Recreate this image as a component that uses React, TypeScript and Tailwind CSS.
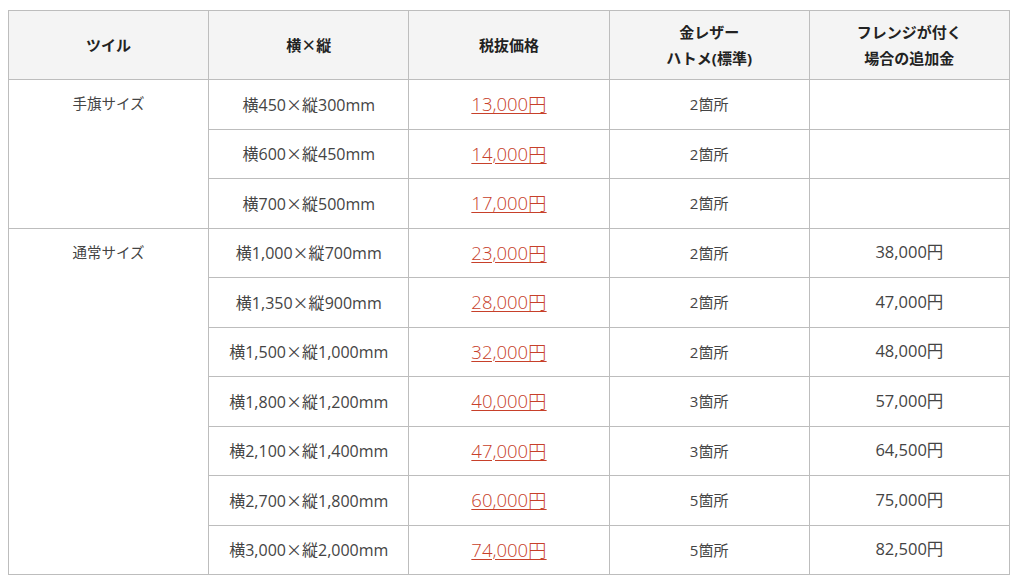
const rows = [
  { w: "450", h: "300", price: "13,000円", hatome: "2箇所", flange: "" },
  { w: "600", h: "450", price: "14,000円", hatome: "2箇所", flange: "" },
  { w: "700", h: "500", price: "17,000円", hatome: "2箇所", flange: "" },
  { w: "1,000", h: "700", price: "23,000円", hatome: "2箇所", flange: "38,000円" },
  { w: "1,350", h: "900", price: "28,000円", hatome: "2箇所", flange: "47,000円" },
  { w: "1,500", h: "1,000", price: "32,000円", hatome: "2箇所", flange: "48,000円" },
  { w: "1,800", h: "1,200", price: "40,000円", hatome: "3箇所", flange: "57,000円" },
  { w: "2,100", h: "1,400", price: "47,000円", hatome: "3箇所", flange: "64,500円" },
  { w: "2,700", h: "1,800", price: "60,000円", hatome: "5箇所", flange: "75,000円" },
  { w: "3,000", h: "2,000", price: "74,000円", hatome: "5箇所", flange: "82,500円" },
];

const cell = "border border-[#bdbdbd] text-center align-middle h-[49.5px] w-[200px]";
const head = cell + " font-bold text-[15px] text-[#222] leading-[26px]";

function Times() {
  return <span className="font-['Noto_Sans_CJK_JP',sans-serif]">×</span>;
}

export default function App() {
  return (
    <div className="min-h-screen bg-white pt-[10px] pl-[8px] font-['Open_Sans','Noto_Sans_CJK_JP',sans-serif] text-[#444]">
      <table className="border-collapse w-[1002px] text-[15px]">
        <thead>
          <tr className="bg-[#f4f4f4] h-[69px]">
            <th className={head}>ツイル</th>
            <th className={head}>
              横<Times />縦
            </th>
            <th className={head}>税抜価格</th>
            <th className={head}>
              金レザー
              <br />
              ハトメ(標準)
            </th>
            <th className={head}>
              フレンジが付く
              <br />
              場合の追加金
            </th>
          </tr>
        </thead>
        <tbody>
          {rows.map((r, i) => (
            <tr key={i}>
              {i === 0 && (
                <td rowSpan={3} className="border border-[#bdbdbd] text-center align-top pt-[13px] w-[200px] text-[14.5px]">
                  手旗サイズ
                </td>
              )}
              {i === 3 && (
                <td rowSpan={7} className="border border-[#bdbdbd] text-center align-top pt-[13px] w-[200px] text-[14.5px]">
                  通常サイズ
                </td>
              )}
              <td className={cell + " text-[16px]"}>
                横{r.w}
                <Times />縦{r.h}mm
              </td>
              <td className={cell}>
                <a href="#" className="text-[18.5px] font-light text-[#c7402a] underline underline-offset-[2px] decoration-1">
                  {r.price}
                </a>
              </td>
              <td className={cell}>{r.hatome}</td>
              <td className={cell + " text-[16.5px]"}>{r.flange}</td>
            </tr>
          ))}
        </tbody>
      </table>
    </div>
  );
}
